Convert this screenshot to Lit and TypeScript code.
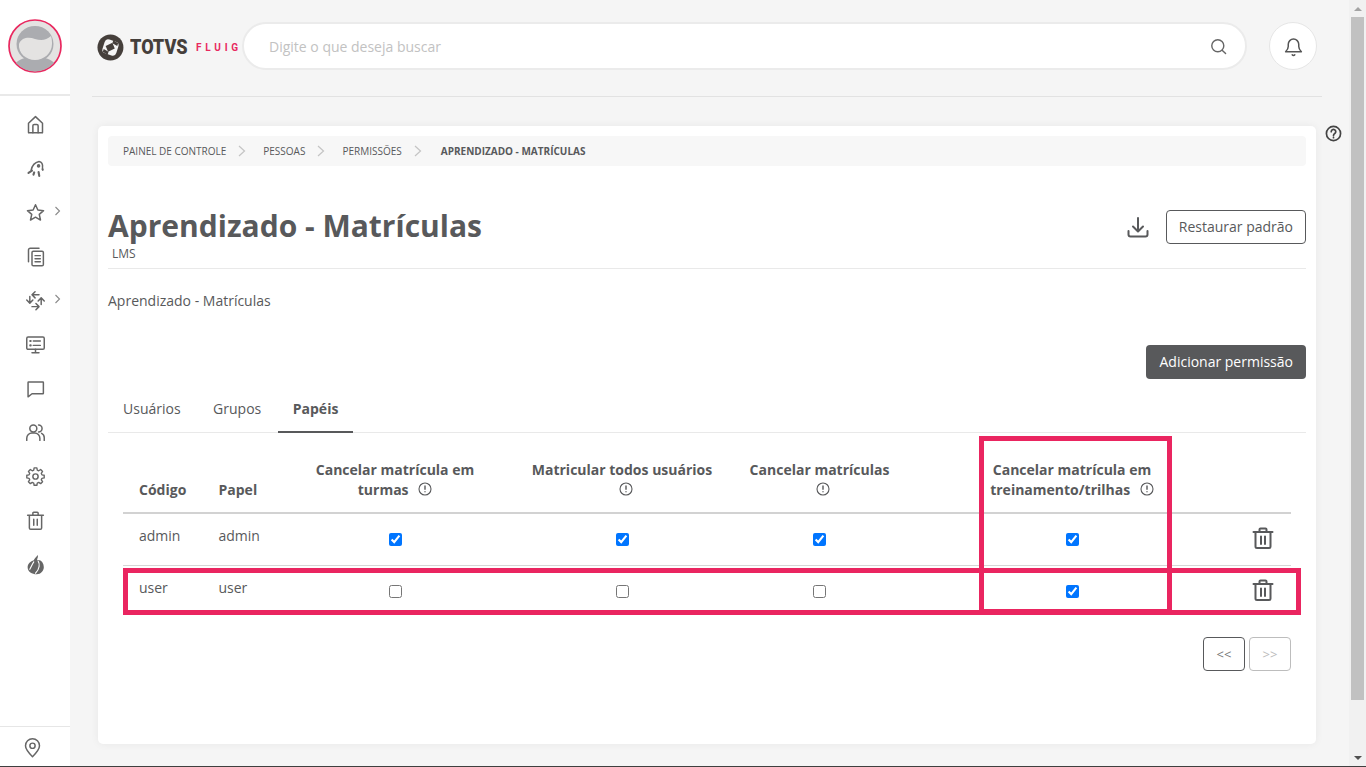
import { LitElement, html, css, svg } from "lit";
import { customElement } from "lit/decorators.js";

const icon = (body: unknown, size = 20, sw = 1.7) => html`<svg width=${size} height=${size} viewBox="0 0 24 24" fill="none" stroke="currentColor" stroke-width=${sw} stroke-linecap="round" stroke-linejoin="round">${body}</svg>`;

const navIcons = [
  { b: svg`<path d="M4 21V10.5L12 3l8 7.500V21a.5.5 0 0 1-.5.5h-15A.5.500 0 0 1 4 21Z"/><path d="M9 21.500V13.500a1.500 1.500 0 0 1 1.500-1.500h3a1.500 1.500 0 0 1 1.500 1.500v8"/>` },
  { b: svg`<path d="M7 14c1-5 4.500-9 9-10 3 .5 4.500 3 4 7"/><circle cx="15.500" cy="9" r="1.200" fill="currentColor"/><path d="M8 14.500l-4 2.500M10.500 16.500l-.8 2.500M15.500 16l.8 4.500M20 12.500l.3 1" stroke-width="2.400"/>` },
  { b: svg`<path d="M12 3.200l2.700 6 6.500.7-4.900 4.300 1.400 6.400L12 17.300l-5.700 3.300 1.400-6.400-4.900-4.300 6.500-.7Z"/>`, arrow: true },
  { b: svg`<path d="M16 2.500H6a2 2 0 0 0-2 2V18"/><rect x="8" y="6" width="13" height="16.500" rx="1.500"/><path d="M11.500 11h6M11.500 14.500h6M11.500 18h6"/>` },
  { b: svg`<path d="M16 5.500H8.500M11.500 2l-3.500 3.500 3.500 3.500M18.500 16.500V9.500M15 12.500l3.500-3.500 3.500 3.500M8 19h7.500M12.500 15.500l3.500 3.500-3.500 3.500M5.500 7.500v7.500M2 11.500l3.500 3.500 3.500-3.500"/>`, arrow: true },
  { b: svg`<rect x="2" y="3.500" width="20" height="14" rx="1.500"/><path d="M12 17.500V21M8 21.500h8M9.500 8h8M9.500 13h8"/><path d="M6 8h.5M6 13h.5" stroke-width="2.400"/>` },
  { b: svg`<path d="M4 4.500h16.500a.5.500 0 0 1 .5.500v12.500a.5.500 0 0 1-.5.500H8l-4.500 3.500V5a.5.500 0 0 1 .5-.5Z"/>` },
  { b: svg`<circle cx="9.500" cy="7.500" r="4"/><path d="M2 21v-2.500a6 6 0 0 1 6-6h3a6 6 0 0 1 6 6V21M15.500 3.500a4 4 0 0 1 0 8M19 13a5.500 5.500 0 0 1 3 5V21"/>` },
  { b: svg`<circle cx="12" cy="12" r="3"/><path d="M10.300 2.500h3.400l.5 2.800 1.800.8 2.400-1.600 2.400 2.400-1.600 2.400.8 1.800 2.800.5v3.400l-2.800.5-.8 1.800 1.600 2.400-2.400 2.400-2.400-1.600-1.800.8-.5 2.800h-3.400l-.5-2.800-1.800-.8-2.400 1.600-2.400-2.400 1.600-2.400-.8-1.800-2.800-.5v-3.400l2.800-.5.8-1.800-1.600-2.400 2.400-2.400 2.400 1.600 1.800-.8Z" transform="translate(12 12) scale(.92) translate(-12 -13.200)"/>` },
  { b: svg`<path d="M3 6h18M9 6V3.500a1 1 0 0 1 1-1h4a1 1 0 0 1 1 1V6M5 6v14.500A1.500 1.500 0 0 0 6.500 22h11a1.500 1.500 0 0 0 1.500-1.500V6M10 10.500v7M14 10.500v7"/>` },
  { b: svg`<path d="M14.500 1c1 3-1 4-.5 6 4-1 7.500 3 7.500 8 0 4-3.500 8-8 8C8 23 3 20 3 15c0-4 3.500-7 7-8 .8-2 2.800-3.500 4.500-6Z" fill="currentColor" stroke="none"/><path d="M15 8c2 3 2 9-3 14M10 9c-2 3-3 6-4.500 8.500" stroke="#fff" stroke-width="1.300"/>` },
];

const trash = svg`<path d="M2.500 6h19M8.500 6V3.500a1 1 0 0 1 1-1h5a1 1 0 0 1 1 1V6M4.500 6v14.500A1.500 1.500 0 0 0 6 22h12a1.500 1.500 0 0 0 1.500-1.500V6M10 10.500v7.500M14 10.500v7.500"/>`;
const info = html`<svg class="info" width="14" height="14" viewBox="0 0 14 14" fill="none" stroke="currentColor"><circle cx="7" cy="7" r="6" stroke-width="1.100"/><path d="M7 3.600v4.200M7 9.300v1" stroke-width="1.400"/></svg>`;
const chevron = html`<svg width="8" height="12" viewBox="0 0 8 12" fill="none" stroke="currentColor" stroke-width="1.200"><path d="M1 1l5.500 5L1 11"/></svg>`;

const rows = [
  { code: "admin", role: "admin", perms: [true, true, true, true] },
  { code: "user", role: "user", perms: [false, false, false, true] },
];

@customElement("app-root")
export class AppRoot extends LitElement {
  static styles = css`
    :host { display: block; width: 1366px; height: 767px; overflow: hidden; position: relative; background: #f5f5f5;
      font-family: "Open Sans", sans-serif; color: #58595b; font-size: 14px; }
    * { box-sizing: border-box; }
    .shell { display: flex; height: 766px; }
    .side { width: 70px; flex: none; background: #fff; display: flex; flex-direction: column; }
    .avatar-wrap { height: 96px; border-bottom: 2px solid #e9e9e9; display: flex; align-items: center; justify-content: center; padding-bottom: 2px; }
    .nav { flex: 1; display: flex; flex-direction: column; padding-top: 6px; }
    .nav-item { height: 44px; position: relative; display: flex; align-items: center; justify-content: center; color: #666; flex: none; }
    .nav-arrow { position: absolute; left: 54px; top: 16px; color: #8a8a8a; }
    .loc { height: 40px; border-top: 1px solid #e6e6e6; display: flex; justify-content: center; align-items: center; color: #666; padding: 2px 6px 0 0; }
    .main { flex: 1; min-width: 0; display: flex; flex-direction: column; }
    .top { height: 97px; margin: 0 27px 0 22px; border-bottom: 1px solid #e2e2e2; display: flex; align-items: flex-start; padding-top: 22px; }
    .logo { width: 150px; flex: none; display: flex; align-items: center; height: 48px; padding-left: 5px; padding-top: 2px; }
    .totvs { font: 900 21px "Roboto", sans-serif; color: #453f3b; width: 58px; margin-left: 6px; display: inline-block; transform: scaleX(.86); transform-origin: left center; }
    .fluig { font: 700 10px "Roboto", sans-serif; color: #e8295f; letter-spacing: 3.800px; margin-left: 8px; padding-top: 1px; white-space: nowrap; }
    .search { width: 1005px; height: 48px; background: #fff; border: 2px solid #ebebeb; border-radius: 24px; display: flex; align-items: center; justify-content: space-between; padding: 0 18px 0 25px; color: #c2c2c2; font-size: 14px; }
    .search svg { color: #666; }
    .bell { width: 48px; height: 48px; border-radius: 50%; background: #fff; border: 1px solid #e6e6e6; margin-left: 22px; display: flex; align-items: center; justify-content: center; color: #555; flex: none; }
    .body { display: flex; padding: 29px 0 0 28px; }
    .card { width: 1218px; height: 618px; background: #fff; border-radius: 5px; box-shadow: 0 0 8px rgba(0,0,0,.06); padding: 10px; position: relative; flex: none; }
    .help { margin: -1px 0 0 9px; color: #444; height: 17px; }
    .crumbs { height: 30px; background: #f7f7f7; border-radius: 4px; display: flex; align-items: center; padding-left: 15px; font-size: 10px; color: #58595b; }
    .crumbs svg { color: #c4c4c4; margin: 0 17px 0 12px; }
    .crumbs b { font-weight: 700; margin-left: 2px; }
    .head { display: flex; justify-content: space-between; align-items: flex-start; margin-top: 40px; height: 63px; border-bottom: 1px solid #e9e9e9; }
    h1 { margin: 0; font-size: 30px; line-height: 40px; font-weight: 700; color: #58595b; }
    .lms { font-size: 12px; line-height: 16px; padding-left: 4px; }
    .actions { display: flex; align-items: center; gap: 16px; padding-top: 4px; }
    .actions svg { color: #58595b; }
    .btn { height: 34px; border: 1px solid #58595b; border-radius: 4px; background: #fff; padding: 0 12px 2px; display: flex; align-items: center; font-size: 14px; color: #58595b; }
    .desc { margin-top: 22px; line-height: 20px; height: 20px; }
    .add-row { display: flex; justify-content: flex-end; margin-top: 34px; }
    .add { height: 34px; border-radius: 4px; background: #58595b; color: #fff; padding: 0 13px 2px; display: flex; align-items: center; font-size: 14px; }
    .tabs { display: flex; height: 54px; border-bottom: 1px solid #e9e9e9; padding-top: 13px; }
    .tab { padding: 0 15px; height: 41px; line-height: 34px; }
    .tab:first-child { margin-right: 2.500px; }
    .tab:nth-child(2) { padding: 0 16.500px 0 15px; }
    .tab.on { font-weight: 700; border-bottom: 2px solid #58595b; }
    .tblwrap { padding: 0 15px; position: relative; }
    table { width: 1168px; border-collapse: collapse; table-layout: fixed; }
    .w1 { width: 79.500px; } .w2 { width: 74.500px; } .w3 { width: 236px; } .w4 { width: 218px; } .w5 { width: 177px; } .w6 { width: 328px; } .w7 { width: 55px; }
    th { height: 80px; vertical-align: bottom; padding: 0 16px 12px; font-weight: 700; line-height: 20px; text-align: center; border-bottom: 2px solid #d2d2d2; white-space: nowrap; }
    th.l, td.l { text-align: left; }
    td { height: 52px; border-bottom: 1px solid #d6d6d6; padding: 0 16px 7px; vertical-align: middle; text-align: center; }
    td.c { padding: 0; }
    td.t { padding: 0 2px 3px 0; color: #58595b; }
    td.t svg { display: block; margin: 0 auto; }
    tr:last-child td { border-bottom: none; }
    .info { vertical-align: -1px; margin-left: 6px; }
    .brk .info { margin-left: 7px; }
    input[type=checkbox] { width: 13px; height: 13px; accent-color: #0075ff; display: block; margin: 0 auto; }
    .pager { display: flex; justify-content: flex-end; gap: 4px; margin-top: 20px; }
    .pg { width: 42px; height: 34px; border: 1px solid #58595b; border-radius: 4px; display: flex; align-items: center; justify-content: center; font-size: 13px; color: #777; }
    .pg.off { border-color: #bdbdbd; color: #bbb; }
    .mark { position: absolute; border: 5px solid #ea2560; pointer-events: none; }
    .mark.h { left: 25px; top: 442px; width: 1178px; height: 47px; }
    .mark.v { left: 881px; top: 310px; width: 193px; height: 178px; }
    .scroll { width: 17px; flex: none; background: #f1f1f1; position: relative; display: flex; flex-direction: column; align-items: center; justify-content: space-between; padding: 7px 0 6px; }
    .thumb { position: absolute; left: 2px; top: 17px; width: 13px; height: 683px; background: #c1c1c1; }
    .up { width: 0; height: 0; border-left: 4px solid transparent; border-right: 4px solid transparent; border-bottom: 4px solid #a3a3a3; }
    .down { width: 0; height: 0; border-left: 4px solid transparent; border-right: 4px solid transparent; border-top: 4px solid #505050; }
    .edge { height: 1px; background: #3f3f3f; }
  `;

  render() {
    return html`
      <div class="shell">
        <aside class="side">
          <div class="avatar-wrap">
            <svg width="54" height="54" viewBox="0 0 54 54">
              <defs><clipPath id="av"><circle cx="27" cy="27" r="25.500"/></clipPath></defs>
              <circle cx="27" cy="27" r="26" fill="#e4e3e2" stroke="#e9285f" stroke-width="1.700"/>
              <g clip-path="url(#av)">
                <path d="M4 54c0-9 6-13 13-15h20c7 2 13 6 13 15Z" fill="#abacb0"/>
                <ellipse cx="27" cy="25" rx="18.500" ry="18" fill="#abacb0"/>
                <path d="M11 25c3-7 10-7 16-5 6 1.500 11 1.500 16-3 1 3 1 6 1 8 0 9-8 16-17 16s-17-7-16-16Z" fill="#e4e3e2"/>
              </g>
            </svg>
          </div>
          <nav class="nav">
            ${navIcons.map((n) => html`<div class="nav-item">
              ${icon(n.b, 21)}
              ${n.arrow ? html`<svg class="nav-arrow" width="7" height="10" viewBox="0 0 7 10" fill="none" stroke="currentColor" stroke-width="1.100"><path d="M1.500 1l4 4-4 4"/></svg>` : ""}
            </div>`)}
          </nav>
          <div class="loc">${icon(svg`<path d="M12 22.500c-5-5-8-8.500-8-12.500a8 8 0 0 1 16 0c0 4-3 7.500-8 12.500Z"/><circle cx="12" cy="10" r="3"/>`, 21)}</div>
        </aside>
        <div class="main">
          <header class="top">
            <div class="logo">
              <svg width="27" height="27" viewBox="0 0 28 28">
                <circle cx="14" cy="14" r="13.500" fill="#453f3b"/>
                <rect x="6.500" y="6.500" width="15" height="15" rx="4" fill="#f5f5f5" transform="rotate(18 14 14)"/>
                <path d="M9 12.500l7-3.500 2.500 6-7 3.500Z" fill="#453f3b"/>
                <path d="M17 6.500l5 3-1 3-5-3ZM11 21.500l-5-3 1-3 5 3Z" fill="#453f3b"/>
              </svg>
              <span class="totvs">TOTVS</span><span class="fluig">FLUIG</span>
            </div>
            <div class="search"><span>Digite o que deseja buscar</span>${icon(svg`<circle cx="11" cy="11" r="8.500"/><path d="M17.500 17.500l4.500 4.500"/>`, 17, 2)}</div>
            <div class="bell">${icon(svg`<path d="M3 18h18c-1.500-1.500-3-3-3-6V9.500a6 6 0 0 0-12 0V12c0 3-1.500 4.500-3 6Z"/><path d="M10.500 21.500a2 2 0 0 0 3 0"/>`, 21)}</div>
          </header>
          <div class="body">
            <section class="card">
              <div class="crumbs">
                <span>PAINEL DE CONTROLE</span>${chevron}
                <span>PESSOAS</span>${chevron}
                <span>PERMISSÕES</span>${chevron}
                <b>APRENDIZADO - MATRÍCULAS</b>
              </div>
              <div class="head">
                <div><h1>Aprendizado - Matrículas</h1><div class="lms">LMS</div></div>
                <div class="actions">
                  ${icon(svg`<path d="M12 3v13M7 11.500l5 5 5-5M2.500 16v3.500A2 2 0 0 0 4.500 21.500h15a2 2 0 0 0 2-2V16"/>`, 24, 2)}
                  <div class="btn">Restaurar padrão</div>
                </div>
              </div>
              <div class="desc">Aprendizado - Matrículas</div>
              <div class="add-row"><div class="add">Adicionar permissão</div></div>
              <div class="tabs">
                <div class="tab">Usuários</div><div class="tab">Grupos</div><div class="tab on">Papéis</div>
              </div>
              <div class="tblwrap">
                <table>
                  <colgroup><col class="w1"/><col class="w2"/><col class="w3"/><col class="w4"/><col class="w5"/><col class="w6"/><col class="w7"/></colgroup>
                  <thead><tr>
                    <th class="l">Código</th><th class="l">Papel</th>
                    <th>Cancelar matrícula em<br/>turmas ${info}</th>
                    <th class="brk">Matricular todos usuários<br/>${info}</th>
                    <th class="brk">Cancelar matrículas<br/>${info}</th>
                    <th>Cancelar matrícula em<br/>treinamento/trilhas ${info}</th>
                    <th></th>
                  </tr></thead>
                  <tbody>
                    ${rows.map((r) => html`<tr>
                      <td class="l">${r.code}</td><td class="l">${r.role}</td>
                      ${r.perms.map((p) => html`<td class="c"><input type="checkbox" .checked=${p}/></td>`)}
                      <td class="t">${icon(trash, 24, 2)}</td>
                    </tr>`)}
                  </tbody>
                </table>
                <div class="pager"><div class="pg">&lt;&lt;</div><div class="pg off">&gt;&gt;</div></div>
              </div>
              <div class="mark v"></div>
              <div class="mark h"></div>
            </section>
            <div class="help">${icon(svg`<circle cx="12" cy="12" r="10" stroke-width="2.400"/><path d="M8.800 9.500a3.200 3.200 0 1 1 5 2.600c-1.200.8-1.800 1.400-1.800 2.700M12 17.500v.5" stroke-width="2.400"/>`, 17)}</div>
          </div>
        </div>
        <div class="scroll"><div class="up"></div><div class="thumb"></div><div class="down"></div></div>
      </div>
      <div class="edge"></div>
    `;
  }
}
